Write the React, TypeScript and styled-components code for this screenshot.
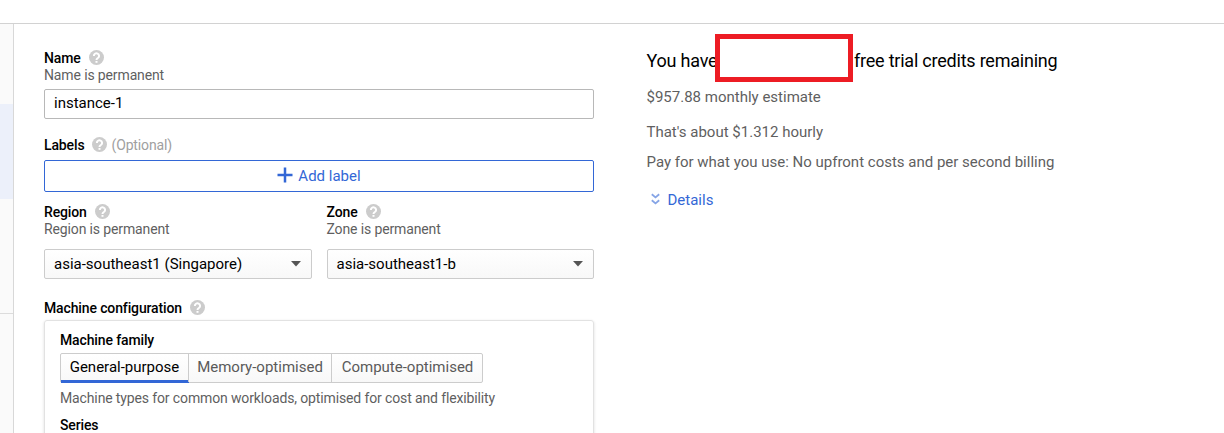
import React from 'react';
import styled, { createGlobalStyle } from 'styled-components';

const GlobalStyle = createGlobalStyle`
  * { box-sizing: border-box; }
  body {
    margin: 0;
    background: #fff;
    overflow: hidden;
    font-family: Roboto, "Liberation Sans", sans-serif;
    font-size: 14px;
    line-height: 17px;
    color: #000;
  }
`;

const Page = styled.div`
  display: flex;
  flex-direction: column;
  width: 1224px;
  height: 433px;
  overflow: hidden;
`;

const TopBar = styled.header`
  flex: none;
  height: 24px;
  border-bottom: 1px solid #d2d2d2;
`;

const Body = styled.div`
  display: flex;
  flex: 1;
  min-height: 0;
`;

const Sidebar = styled.nav`
  flex: none;
  width: 14px;
  background: #fafafa;
  border-right: 1px solid #d8d8d8;
  padding-top: 80px;
`;

const ActiveItem = styled.div`
  height: 95px;
  background: #ecf0fa;
`;

const SidebarRule = styled.div`
  margin-top: 114px;
  height: 1px;
  background: #dcdcdc;
`;

const Form = styled.main`
  flex: none;
  width: 550px;
  margin-left: 30px;
  padding-top: 26px;
`;

const Label = styled.div<{ $top?: number }>`
  display: flex;
  align-items: center;
  height: 17px;
  margin-top: ${(p) => p.$top ?? 0}px;
  font-weight: 500;
  letter-spacing: -0.13px;
  white-space: nowrap;

  svg {
    margin-left: 8px;
    margin-bottom: 2px;
  }
`;

const Optional = styled.span`
  margin-left: 4px;
  font-weight: 400;
  color: #a0a0a0;
  letter-spacing: -0.13px;
`;

const Hint = styled.div<{ $top?: number }>`
  height: 17px;
  margin-top: ${(p) => p.$top ?? 0}px;
  color: #5f5f5f;
  letter-spacing: -0.13px;
  white-space: nowrap;
`;

const NameInput = styled.input`
  display: block;
  width: 100%;
  height: 30px;
  margin-top: 5px;
  padding: 0 9px 3px;
  border: 1px solid #b8b8b8;
  border-radius: 2px;
  background: #fff;
  color: #000;
  font: 400 15px/18px Roboto, "Liberation Sans", sans-serif;
  outline: none;
`;

const AddButton = styled.button`
  display: flex;
  align-items: center;
  justify-content: center;
  gap: 5px;
  width: 100%;
  height: 32px;
  margin-top: 6px;
  padding: 0;
  border: 1px solid #3367d6;
  border-radius: 2px;
  background: #fff;
  color: #3367d6;
  font: 400 15px/18px Roboto, "Liberation Sans", sans-serif;

  svg { margin-bottom: 2px; }
`;

const Columns = styled.div`
  display: grid;
  grid-template-columns: 268px 267.5px;
  column-gap: 14.5px;
  margin-top: 12px;
`;

const Select = styled.div`
  display: flex;
  align-items: center;
  justify-content: space-between;
  height: 30px;
  margin-top: 11px;
  padding: 0 10px 0 9px;
  border: 1px solid #ccc;
  border-radius: 2px;
  background: linear-gradient(#fff, #f8f8f8);
  font-size: 15px;
`;

const Card = styled.section`
  height: 140px;
  margin-top: 3px;
  padding: 11px 15px;
  border: 1px solid #e2e2e2;
  border-radius: 3px;
  box-shadow: 0 1px 3px rgba(0, 0, 0, 0.14);
`;

const Tabs = styled.div`
  display: flex;
  width: 423px;
  height: 30px;
  margin-top: 4px;
  border: 1px solid #ccc;
  border-radius: 2px;
  background: linear-gradient(#fff, #f8f8f8);
`;

const Tab = styled.button<{ $active?: boolean; $width: number }>`
  flex: none;
  width: ${(p) => p.$width}px;
  padding: 0 1px 0 0;
  margin-bottom: ${(p) => (p.$active ? -1 : 0)}px;
  border: 0;
  border-bottom: ${(p) => (p.$active ? '3px solid #3367d6' : '2px solid transparent')};
  background: none;
  color: ${(p) => (p.$active ? '#000' : '#5a5a5a')};
  font: 400 15px/18px Roboto, "Liberation Sans", sans-serif;
  white-space: nowrap;

  & + & { box-shadow: -1px 0 0 #ccc; }
  &:last-child { padding: 0; }
`;

const Summary = styled.aside`
  margin-left: 52.5px;
  padding-top: 10px;
  color: #5f5f5f;
  font-size: 15px;
  line-height: 18px;
  white-space: nowrap;
`;

const Credits = styled.div`
  display: flex;
  align-items: center;
  height: 48px;
  color: #000;
  font-size: 18px;
  line-height: 22px;
  letter-spacing: -0.22px;
`;

const CreditsLead = styled.span`
  width: 68.5px;
  padding-top: 5px;
`;

const CreditsTail = styled.span`
  margin-left: 1px;
  padding-top: 5px;
`;

const Redaction = styled.div`
  flex: none;
  width: 138px;
  height: 48px;
  border: 5px solid #ed1c24;
  background: #fff;
`;

const Line = styled.div<{ $top: number }>`
  height: 18px;
  margin-top: ${(p) => p.$top}px;
`;

const Details = styled.a`
  display: flex;
  align-items: center;
  height: 18px;
  margin-top: 20px;
  padding-left: 4px;
  gap: 8px;
  color: #3367d6;

  svg { margin-bottom: 2px; }
`;

const HelpIcon = () => (
  <svg width="15" height="15" viewBox="0 0 15 15">
    <circle cx="7.5" cy="7.5" r="7.5" fill="#ccc" />
    <path d="M4.9 6a2.6 2.5 0 1 1 4.2 1.8C8.1 8.5 7.5 8.8 7.5 10" fill="none" stroke="#fff" strokeWidth="2" />
    <rect x="6.5" y="11" width="2" height="1.8" fill="#fff" />
  </svg>
);

const PlusIcon = () => (
  <svg width="16" height="16" viewBox="0 0 16 16">
    <path d="M8 0.5v15M0.5 8h15" stroke="#3367d6" strokeWidth="2.5" />
  </svg>
);

const Caret = () => (
  <svg width="10" height="6" viewBox="0 0 10 6">
    <path d="M0 0h10L5 5.4z" fill="#555" />
  </svg>
);

const Chevrons = () => (
  <svg width="9" height="12" viewBox="0 0 9 12">
    <path d="M0.8 1.2l3.7 3.2 3.7-3.2M0.8 7.2l3.7 3.2 3.7-3.2" fill="none" stroke="#85a4e6" strokeWidth="1.8" />
  </svg>
);

export default function App() {
  return (
    <Page>
      <GlobalStyle />
      <TopBar />
      <Body>
        <Sidebar>
          <ActiveItem />
          <SidebarRule />
        </Sidebar>
        <Form>
          <Label>Name<HelpIcon /></Label>
          <Hint>Name is permanent</Hint>
          <NameInput defaultValue="instance-1" />
          <Label $top={18}>Labels<HelpIcon /><Optional>(Optional)</Optional></Label>
          <AddButton><PlusIcon />Add label</AddButton>
          <Columns>
            <div>
              <Label>Region<HelpIcon /></Label>
              <Hint>Region is permanent</Hint>
              <Select>asia-southeast1 (Singapore)<Caret /></Select>
            </div>
            <div>
              <Label>Zone<HelpIcon /></Label>
              <Hint>Zone is permanent</Hint>
              <Select>asia-southeast1-b<Caret /></Select>
            </div>
          </Columns>
          <Label $top={21}>Machine configuration<HelpIcon /></Label>
          <Card>
            <Label>Machine family</Label>
            <Tabs>
              <Tab $active $width={128}>General-purpose</Tab>
              <Tab $width={143}>Memory-optimised</Tab>
              <Tab $width={151}>Compute-optimised</Tab>
            </Tabs>
            <Hint $top={7}>Machine types for common workloads, optimised for cost and flexibility</Hint>
            <Label $top={10}>Series</Label>
          </Card>
        </Form>
        <Summary>
          <Credits>
            <CreditsLead>You have</CreditsLead>
            <Redaction />
            <CreditsTail>free trial credits remaining</CreditsTail>
          </Credits>
          <Line $top={6}>$957.88 monthly estimate</Line>
          <Line $top={17}>That's about $1.312 hourly</Line>
          <Line $top={12}>Pay for what you use: No upfront costs and per second billing</Line>
          <Details><Chevrons />Details</Details>
        </Summary>
      </Body>
    </Page>
  );
}
